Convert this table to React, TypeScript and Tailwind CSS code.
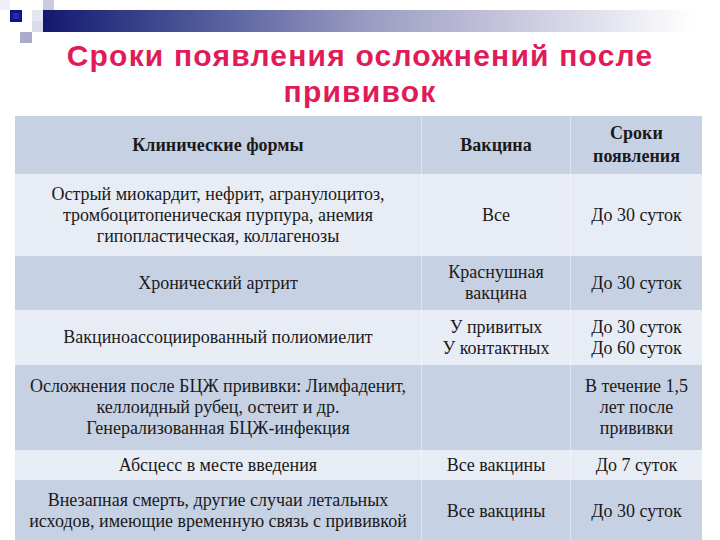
import React from "react";

type Row = {
  h: string;
  bg: string;
  c1: string[];
  c2: string[];
  c3: string[];
};

const BLUE = "bg-[#c7d1e4]";
const LIGHT = "bg-[#e8ecf5]";

const rows: Row[] = [
  {
    h: "h-[82px]",
    bg: LIGHT,
    c1: [
      "Острый миокардит, нефрит, агранулоцитоз,",
      "тромбоцитопеническая пурпура, анемия",
      "гипопластическая, коллагенозы",
    ],
    c2: ["Все"],
    c3: ["До 30 суток"],
  },
  {
    h: "h-[54px]",
    bg: BLUE,
    c1: ["Хронический артрит"],
    c2: ["Краснушная", "вакцина"],
    c3: ["До 30 суток"],
  },
  {
    h: "h-[55px]",
    bg: LIGHT,
    c1: ["Вакциноассоциированный полиомиелит"],
    c2: ["У привитых", "У контактных"],
    c3: ["До 30 суток", "До 60 суток"],
  },
  {
    h: "h-[85px]",
    bg: BLUE,
    c1: [
      "Осложнения после БЦЖ прививки: Лимфаденит,",
      "келлоидный рубец, остеит и др.",
      "Генерализованная БЦЖ-инфекция",
    ],
    c2: [],
    c3: ["В течение 1,5", "лет после", "прививки"],
  },
  {
    h: "h-[30px]",
    bg: LIGHT,
    c1: ["Абсцесс в месте введения"],
    c2: ["Все вакцины"],
    c3: ["До 7 суток"],
  },
  {
    h: "h-[62px]",
    bg: BLUE,
    c1: [
      "Внезапная смерть, другие случаи летальных",
      "исходов, имеющие временную связь с прививкой",
    ],
    c2: ["Все вакцины"],
    c3: ["До 30 суток"],
  },
];

function Cell({ lines, extra = "" }: { lines: string[]; extra?: string }) {
  return (
    <div
      className={`flex flex-col items-center justify-center text-center [font-family:Liberation_Serif] text-[18px] leading-[21px] text-[#1a1a1a] ${extra}`}
    >
      {lines.map((l, i) => (
        <span key={i} className="whitespace-nowrap">
          {l}
        </span>
      ))}
    </div>
  );
}

export default function App() {
  return (
    <div className="w-[720px] h-[540px] overflow-hidden bg-white relative [font-family:Liberation_Serif]">
      {/* top decoration */}
      <div className="relative h-[36px]">
        <svg
          className="absolute left-0 top-0"
          width="60"
          height="46"
          viewBox="0 0 60 46"
        >
          <rect x="0" y="0" width="10" height="10" fill="#eef0f6" />
          <rect x="43" y="0" width="11" height="10" fill="#c9cbe0" />
          <rect x="32" y="10" width="11" height="11" fill="#e4e6f0" />
          <rect x="32" y="21" width="11" height="11" fill="#d9dbe9" />
          <rect x="20" y="32" width="12" height="11" fill="#a9abca" />
          <rect x="10" y="10" width="12" height="12" fill="#14148a" />
          <rect x="13" y="13" width="6" height="6" fill="#2a2aa8" />
        </svg>
        <div className="absolute left-[43px] top-[10px] h-[22px] w-[650px] bg-gradient-to-r from-[#161670] via-[#9c9cc2] to-white" />
      </div>

      {/* title */}
      <div className="h-[80px] flex flex-col items-center pt-[2px] [font-family:Liberation_Sans] font-bold text-[30px] leading-[36px] text-[#e01b58] tracking-[1.2px] [text-shadow:1px_1px_1px_rgba(255,255,255,0.9)]">
        <span>Сроки появления осложнений после</span>
        <span>прививок</span>
      </div>

      {/* table */}
      <div className="ml-[15px] w-[687px] flex flex-col">
        <div className={`grid grid-cols-[406px_149px_132px] h-[58px] ${BLUE}`}>
          <Cell lines={["Клинические формы"]} extra="font-bold text-[17px]" />
          <Cell lines={["Вакцина"]} extra="font-bold text-[17px] border-l border-white/40" />
          <Cell
            lines={["Сроки", "появления"]}
            extra="font-bold text-[17px] leading-[23px] border-l border-white/40"
          />
        </div>
        {rows.map((r, i) => (
          <div
            key={i}
            className={`grid grid-cols-[406px_149px_132px] shrink-0 ${r.h} ${r.bg}`}
          >
            <Cell lines={r.c1} />
            <Cell lines={r.c2} extra="border-l border-white/40" />
            <Cell lines={r.c3} extra="border-l border-white/40" />
          </div>
        ))}
      </div>
    </div>
  );
}
